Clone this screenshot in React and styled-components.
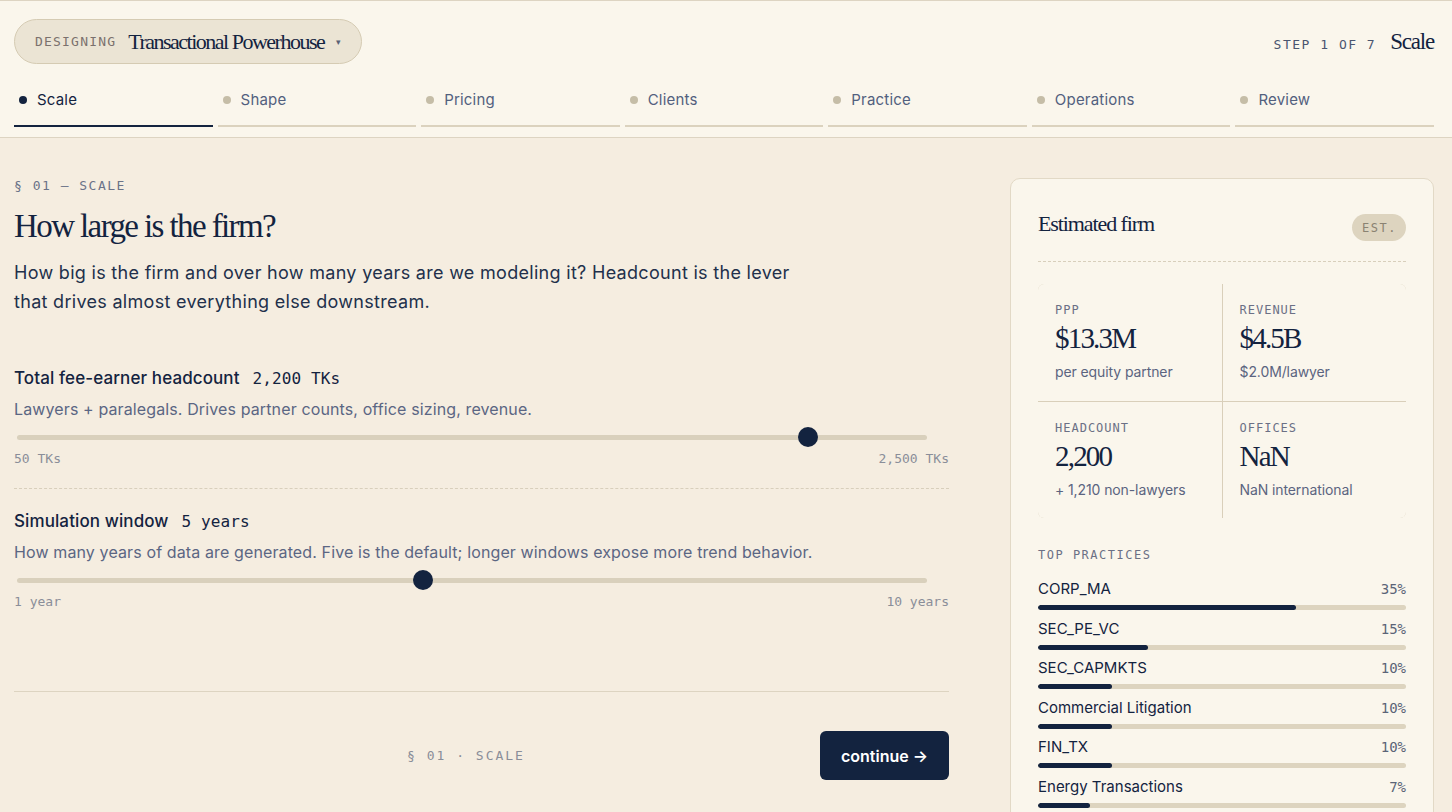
import React from "react";
import styled, { createGlobalStyle } from "styled-components";

const NAVY = "#13233f";
const SERIF = `"Liberation Serif", "DejaVu Serif", serif`;
const SANS = `Inter, "Noto Sans", sans-serif`;
const MONO = `"DejaVu Sans Mono", "Liberation Mono", monospace`;

const Global = createGlobalStyle`
  html, body { margin: 0; padding: 0; background: #f5ede0; }
  body { font-family: ${SANS}; color: ${NAVY}; min-height: 100vh; }
  * { box-sizing: border-box; }
`;

const Header = styled.header`
  background: #faf6ec;
  border-top: 1px solid #ddd4c2;
  border-bottom: 1px solid #ddd4c2;
  padding: 18px 18px 10px 14px;
`;

const TopRow = styled.div`
  display: flex;
  align-items: center;
  justify-content: space-between;
`;

const Pill = styled.button`
  display: flex;
  align-items: center;
  height: 45px;
  padding: 0 20px 0 20px;
  border-radius: 999px;
  background: #ebe4d4;
  border: 1px solid #d5cbb3;
  cursor: pointer;
  gap: 12px;
`;

const PillTag = styled.span`
  font-family: ${MONO};
  font-size: 13px;
  letter-spacing: 1.2px;
  color: #7b716d;
`;

const PillTitle = styled.span`
  font-family: ${SERIF};
  font-size: 22px;
  letter-spacing: -1.5px;
  color: ${NAVY};
`;

const Caret = styled.span`
  font-size: 9px;
  color: #5a6275;
  margin-left: 0;
`;

const StepInfo = styled.div`
  display: flex;
  align-items: baseline;
  gap: 14px;
`;

const StepText = styled.span`
  font-family: ${MONO};
  font-size: 13px;
  letter-spacing: 1.5px;
  color: #4a5570;
`;

const StepName = styled.span`
  font-family: ${SERIF};
  font-size: 23px;
  letter-spacing: -1.2px;
  color: ${NAVY};
`;

const Tabs = styled.nav`
  display: grid;
  grid-template-columns: repeat(7, 1fr);
  gap: 5px;
  margin-top: 26px;
`;

const Tab = styled.div`
  display: flex;
  align-items: center;
  gap: 10px;
  padding: 0 0 15px 5px;
  border-bottom: 2px solid ${(p) => (p.$active ? NAVY : "#dbd2be")};
  font-size: 15px;
  line-height: 20px;
  letter-spacing: 0.2px;
  color: ${(p) => (p.$active ? NAVY : "#52607e")};
`;

const Dot = styled.span`
  width: 8px;
  height: 8px;
  border-radius: 50%;
  background: ${(p) => (p.$active ? NAVY : "#c5bda7")};
`;

const Main = styled.main`
  display: grid;
  grid-template-columns: 1fr 424px;
  gap: 61px;
  padding: 40px 18px 0 14px;
  align-items: start;
`;

const Left = styled.section`
  display: flex;
  flex-direction: column;
`;

const Eyebrow = styled.div`
  font-family: ${MONO};
  font-size: 13px;
  line-height: 16px;
  letter-spacing: 1.5px;
  color: #6b7388;
`;

const Title = styled.h1`
  margin: 12px 0 0;
  font-family: ${SERIF};
  font-weight: 400;
  font-size: 33px;
  line-height: 40px;
  letter-spacing: -1.6px;
  color: ${NAVY};
`;

const Lead = styled.p`
  margin: 12px 0 0;
  max-width: 800px;
  font-size: 18px;
  line-height: 29px;
  letter-spacing: 0.3px;
  color: #22304b;
`;

const Field = styled.div`
  display: flex;
  flex-direction: column;
  margin-top: ${(p) => p.$mt}px;
`;

const FieldLabel = styled.div`
  display: flex;
  align-items: baseline;
  gap: 13px;
  font-size: 17px;
  line-height: 22px;
  font-weight: 500;
  letter-spacing: 0.1px;
  color: ${NAVY};
`;

const FieldValue = styled.span`
  font-family: ${MONO};
  font-size: 16px;
  font-weight: 400;
  color: ${NAVY};
`;

const Hint = styled.div`
  margin-top: 8px;
  font-size: 16px;
  line-height: 22px;
  letter-spacing: 0.12px;
  color: #5b6683;
`;

const SliderWrap = styled.div`
  position: relative;
  height: 20px;
  margin: 7px 22px 0 3px;
  display: flex;
  align-items: center;
`;

const Track = styled.div`
  width: 100%;
  height: 5px;
  border-radius: 3px;
  background: #d9d0bc;
`;

const Thumb = styled.div`
  position: absolute;
  top: 0;
  width: 20px;
  height: 20px;
  margin-left: -10px;
  border-radius: 50%;
  background: ${NAVY};
`;

const RangeLabels = styled.div`
  display: flex;
  justify-content: space-between;
  margin-top: 4px;
  font-family: ${MONO};
  font-size: 13px;
  line-height: 16px;
  color: #8a8e99;
`;

const DashedRule = styled.hr`
  margin: 21px 0 0;
  border: 0;
  border-top: 1px dashed #d8cfbc;
`;

const SolidRule = styled.hr`
  margin: 81px 0 0;
  border: 0;
  border-top: 1px solid #ddd4c1;
`;

const Footer = styled.div`
  display: flex;
  align-items: center;
  justify-content: space-between;
  margin-top: 39px;
`;

const BackSlot = styled.div`
  width: 98px;
  height: 49px;
  visibility: hidden;
`;

const FooterTag = styled.span`
  font-family: ${MONO};
  font-size: 13px;
  letter-spacing: 2px;
  color: #8a8e99;
`;

const Continue = styled.button`
  height: 49px;
  padding: 0 21px;
  border: 0;
  border-radius: 6px;
  background: #13233f;
  color: #fff;
  font-family: ${SANS};
  font-size: 16px;
  font-weight: 600;
  cursor: pointer;
`;

const Card = styled.aside`
  background: #faf6ec;
  border: 1px solid #e2d9c6;
  border-radius: 10px;
  padding: 27px 27px 28px;
`;

const CardHead = styled.div`
  display: flex;
  align-items: center;
  justify-content: space-between;
  height: 36px;
`;

const CardTitle = styled.h2`
  margin: 0;
  font-family: ${SERIF};
  font-weight: 400;
  font-size: 22px;
  letter-spacing: -1.1px;
  color: ${NAVY};
`;

const Badge = styled.span`
  display: inline-flex;
  align-items: center;
  height: 27px;
  padding: 0 9px 0 10px;
  border-radius: 999px;
  background: #ddd4bf;
  font-family: ${MONO};
  font-size: 12px;
  letter-spacing: 1.5px;
  color: #8a8272;
  margin-top: 7px;
`;

const CardRule = styled.div`
  margin-top: 19px;
  border-top: 1px dashed #d8cfbc;
`;

const StatGrid = styled.div`
  display: grid;
  grid-template-columns: 1fr 1fr;
  gap: 1px;
  margin-top: 22px;
  background: #d9cfba;
  border-radius: 6px;
  overflow: hidden;
`;

const Stat = styled.div`
  background: #faf6ec;
  height: ${(p) => (p.$top ? 117 : 116)}px;
  padding: 19px 17px 0 17px;
  display: flex;
  flex-direction: column;
`;

const StatLabel = styled.div`
  font-family: ${MONO};
  font-size: 12px;
  line-height: 14px;
  letter-spacing: 1px;
  color: #6b7085;
`;

const StatValue = styled.div`
  margin-top: 4px;
  font-family: ${SERIF};
  font-size: 29px;
  line-height: 34px;
  letter-spacing: -1.8px;
  color: ${NAVY};
`;

const StatSub = styled.div`
  margin-top: 8px;
  font-size: 14px;
  line-height: 18px;
  letter-spacing: -0.1px;
  color: #5b6480;
`;

const SectionLabel = styled.div`
  margin-top: 30px;
  font-family: ${MONO};
  font-size: 12px;
  line-height: 14px;
  letter-spacing: 1.5px;
  color: #6b7085;
`;

const PracticeList = styled.div`
  display: flex;
  flex-direction: column;
  gap: 8.5px;
  margin-top: 17px;
`;

const Practice = styled.div`
  display: flex;
  flex-direction: column;
  gap: 6px;
`;

const PracticeRow = styled.div`
  display: flex;
  justify-content: space-between;
  align-items: baseline;
  font-size: 15px;
  line-height: 20px;
  color: ${NAVY};
`;

const Pct = styled.span`
  font-family: ${MONO};
  font-size: 14px;
  color: #5b6477;
`;

const Bar = styled.div`
  height: 5px;
  border-radius: 3px;
  background: #ddd4bf;
  overflow: hidden;
`;

const BarFill = styled.div`
  height: 100%;
  border-radius: 3px;
  background: ${NAVY};
`;

const tabs = ["Scale", "Shape", "Pricing", "Clients", "Practice", "Operations", "Review"];

const practices = [
  ["CORP_MA", 35],
  ["SEC_PE_VC", 15],
  ["SEC_CAPMKTS", 10],
  ["Commercial Litigation", 10],
  ["FIN_TX", 10],
  ["Energy Transactions", 7],
];

function Slider({ frac }) {
  return (
    <SliderWrap>
      <Track />
      <Thumb style={{ left: `calc(10px + ${frac} * (100% - 20px))` }} />
    </SliderWrap>
  );
}

export default function App() {
  return (
    <>
      <Global />
      <Header>
        <TopRow>
          <Pill>
            <PillTag>DESIGNING</PillTag>
            <PillTitle>Transactional Powerhouse</PillTitle>
            <Caret>▾</Caret>
          </Pill>
          <StepInfo>
            <StepText>STEP 1 OF 7</StepText>
            <StepName>Scale</StepName>
          </StepInfo>
        </TopRow>
        <Tabs>
          {tabs.map((t, i) => (
            <Tab key={t} $active={i === 0}>
              <Dot $active={i === 0} />
              {t}
            </Tab>
          ))}
        </Tabs>
      </Header>
      <Main>
        <Left>
          <Eyebrow>§ 01 — SCALE</Eyebrow>
          <Title>How large is the firm?</Title>
          <Lead>
            How big is the firm and over how many years are we modeling it? Headcount is the lever
            that drives almost everything else downstream.
          </Lead>
          <Field $mt={51}>
            <FieldLabel>
              Total fee-earner headcount <FieldValue>2,200 TKs</FieldValue>
            </FieldLabel>
            <Hint>Lawyers + paralegals. Drives partner counts, office sizing, revenue.</Hint>
            <Slider frac={(2200 - 50) / (2500 - 50)} />
            <RangeLabels>
              <span>50 TKs</span>
              <span>2,500 TKs</span>
            </RangeLabels>
          </Field>
          <DashedRule />
          <Field $mt={21}>
            <FieldLabel>
              Simulation window <FieldValue>5 years</FieldValue>
            </FieldLabel>
            <Hint>
              How many years of data are generated. Five is the default; longer windows expose more
              trend behavior.
            </Hint>
            <Slider frac={(5 - 1) / (10 - 1)} />
            <RangeLabels>
              <span>1 year</span>
              <span>10 years</span>
            </RangeLabels>
          </Field>
          <SolidRule />
          <Footer>
            <BackSlot />
            <FooterTag>§ 01 · SCALE</FooterTag>
            <Continue>continue →</Continue>
          </Footer>
        </Left>
        <Card>
          <CardHead>
            <CardTitle>Estimated firm</CardTitle>
            <Badge>EST.</Badge>
          </CardHead>
          <CardRule />
          <StatGrid>
            <Stat $top>
              <StatLabel>PPP</StatLabel>
              <StatValue>$13.3M</StatValue>
              <StatSub>per equity partner</StatSub>
            </Stat>
            <Stat $top>
              <StatLabel>REVENUE</StatLabel>
              <StatValue>$4.5B</StatValue>
              <StatSub>$2.0M/lawyer</StatSub>
            </Stat>
            <Stat>
              <StatLabel>HEADCOUNT</StatLabel>
              <StatValue>2,200</StatValue>
              <StatSub>+ 1,210 non-lawyers</StatSub>
            </Stat>
            <Stat>
              <StatLabel>OFFICES</StatLabel>
              <StatValue>NaN</StatValue>
              <StatSub>NaN international</StatSub>
            </Stat>
          </StatGrid>
          <SectionLabel>TOP PRACTICES</SectionLabel>
          <PracticeList>
            {practices.map(([name, pct]) => (
              <Practice key={name}>
                <PracticeRow>
                  <span>{name}</span>
                  <Pct>{pct}%</Pct>
                </PracticeRow>
                <Bar>
                  <BarFill style={{ width: `${pct * 2}%` }} />
                </Bar>
              </Practice>
            ))}
          </PracticeList>
        </Card>
      </Main>
    </>
  );
}
